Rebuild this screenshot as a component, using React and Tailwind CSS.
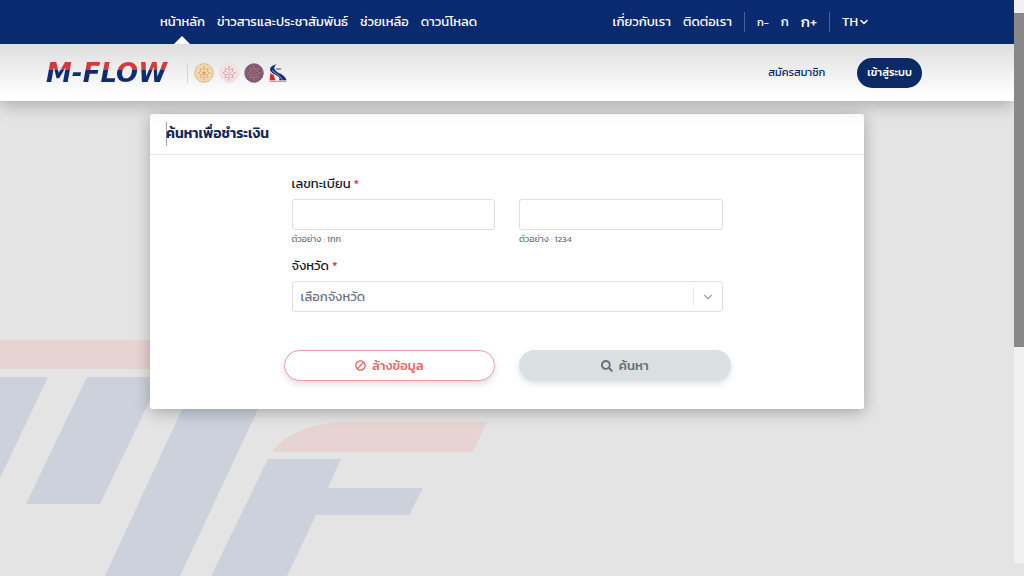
import React from "react";
import { FaBan, FaSearch } from "react-icons/fa";
import { FiChevronDown } from "react-icons/fi";

const NAV_LINKS = ["ข่าวสารและประชาสัมพันธ์", "ช่วยเหลือ", "ดาวน์โหลด"];

function Seal({ label, ring, fill, ink }) {
  return (
    <svg viewBox="0 0 40 40" className="size-5" role="img" aria-label={label}>
      <circle cx="20" cy="20" r="18.5" fill={fill} stroke={ring} strokeWidth="2" strokeDasharray="5 1" />
      <circle cx="20" cy="20" r="14.5" fill="none" stroke={ink} strokeWidth="1.5" strokeDasharray="2 2" />
      <path
        d="M20 7l3 6 5-2-1 6 5 3-5 3 1 6-5-1-3 5-3-5-5 1 1-6-5-3 5-3-1-6 5 2zM14 17l6 4 6-4M13 24l7-2 7 2M20 12v17"
        fill="none"
        stroke={ink}
        strokeWidth="1.6"
      />
      <circle cx="20" cy="20" r="3" fill={ring} />
    </svg>
  );
}

function HighwayMark() {
  return (
    <svg viewBox="0 0 54 54" className="size-[18px]" role="img" aria-label="กรมทางหลวง">
      <path d="M24 1C8 4 1 11 4 20c4 9 20 12 26 20 2 3 2 6 0 9h23c-4-12-13-18-25-23C16 20 10 9 24 1z" fill="#172f7c" />
      <path d="M9 19c8 9 25 14 31 29" fill="none" stroke="#fff" strokeWidth="1.5" />
      <path d="M4 28l10 5 5 16H2z" fill="#d8252f" />
      <path d="M21 15h15" stroke="#6b7280" strokeWidth="4" />
      <path d="M1 52h51" stroke="#c3495a" strokeWidth="2" />
    </svg>
  );
}

function Watermark() {
  return (
    <svg
      viewBox="0 0 512 256"
      className="pointer-events-none absolute left-0 top-80 h-64 w-[512px]"
      aria-hidden="true"
    >
      <g fill="#e7d3d2">
        <path d="M0 20H270L250 49H0z" />
        <path d="M272 132C287 112 315 102 350 102H487L473 132z" />
      </g>
      <g fill="#cdd1dc">
        <path d="M0 57H48L0 158z" />
        <path d="M87 57H161L100 184H26z" />
        <path d="M197 57H273L180 256H105z" />
        <path d="M268 139H341L328 168H423L409 195H316L287 256H211z" />
      </g>
    </svg>
  );
}

function Required() {
  return <span className="text-[#e02b3c]">*</span>;
}

function TopBar() {
  return (
    <div className="relative z-20 bg-[#0a2a70] pl-4 text-white">
      <div className="mx-auto flex h-11 max-w-[710px] items-center justify-between whitespace-nowrap text-[13px]">
        <nav className="flex h-full items-center gap-3">
          <a href="#home" className="relative flex h-full items-center">
            หน้าหลัก
            <span className="absolute bottom-0 left-1/2 size-0 -translate-x-1/2 border-x-8 border-b-8 border-x-transparent border-b-white" />
          </a>
          {NAV_LINKS.map((label) => (
            <a key={label} href="#section">
              {label}
            </a>
          ))}
        </nav>
        <div className="flex items-center gap-3">
          <a href="#about">เกี่ยวกับเรา</a>
          <a href="#contact">ติดต่อเรา</a>
          <div className="flex h-5 items-center gap-3 border-x border-[#4a6296] px-3">
            <button type="button" className="text-[11px]">ก-</button>
            <button type="button" className="text-[13px]">ก</button>
            <button type="button" className="text-[15px]">ก+</button>
          </div>
          <button type="button" className="flex items-center">
            TH
            <FiChevronDown className="size-3" strokeWidth={3} />
          </button>
        </div>
      </div>
    </div>
  );
}

function BrandBar() {
  return (
    <header className="relative z-10 flex h-[57px] items-center justify-between bg-linear-to-b from-[#dedede] to-white to-90% pl-[46px] pr-[92px] shadow-[0_4px_16px_rgba(0,0,0,0.25)]">
      <div className="flex items-center gap-[5px]">
        <a
          href="#home"
          className="w-[136px] bg-linear-to-b from-[#d33a3c] from-38% to-[#102c70] to-38% bg-clip-text font-['DejaVu_Sans'] text-[26px] leading-7 font-bold text-transparent italic"
        >
          M-FLOW
        </a>
        <span className="h-5 w-px bg-gray-300" />
        <div className="flex items-center gap-[5px] pl-px">
          <Seal label="ตราหน่วยงาน 1" ring="#dda95c" fill="#f3dfbd" ink="#d9a65d" />
          <Seal label="ตราหน่วยงาน 2" ring="#efd3d3" fill="#f8eeee" ink="#cf8f98" />
          <Seal label="ตราหน่วยงาน 3" ring="#80597b" fill="#7a5578" ink="#b58169" />
          <HighwayMark />
        </div>
      </div>
      <div className="flex items-center gap-8 whitespace-nowrap text-[11px] text-[#0a2a66]">
        <a href="#register">สมัครสมาชิก</a>
        <button type="button" className="h-[30px] rounded-full bg-[#0a2a66] px-2.5 font-medium text-white">
          เข้าสู่ระบบ
        </button>
      </div>
    </header>
  );
}

function PlateField({ id, label, hint }) {
  return (
    <div>
      <input
        id={id}
        type="text"
        aria-label={label}
        className="block h-[31px] w-full rounded-[3px] border border-[#dddee0] bg-white px-2 text-[13px]"
      />
      <p className="mt-[3px] text-[9px] leading-3 text-gray-500">{hint}</p>
    </div>
  );
}

function SearchCard() {
  return (
    <main className="relative mx-auto mt-[13px] max-w-[714px] rounded-xs bg-white pb-7 shadow-[0_3px_16px_rgba(0,0,0,0.28)]">
      <div className="flex h-[41px] items-center border-b border-gray-200 px-4">
        <span className="-mr-px h-6 w-px bg-gray-400" />
        <h1 className="text-sm font-semibold text-[#14275a]">ค้นหาเพื่อชำระเงิน</h1>
      </div>
      <form className="mx-auto max-w-[447px] pt-[19px]" onSubmit={(e) => e.preventDefault()}>
        <div className="px-2">
          <label htmlFor="plate-prefix" className="mb-[5px] block text-[13px] leading-5 text-gray-900">
            เลขทะเบียน <Required />
          </label>
          <div className="grid grid-cols-2 gap-6">
            <PlateField id="plate-prefix" label="เลขทะเบียน หมวด" hint="ตัวอย่าง : 1กก" />
            <PlateField id="plate-number" label="เลขทะเบียน หมายเลข" hint="ตัวอย่าง : 1234" />
          </div>
          <label htmlFor="province" className="mt-[11px] mb-[5px] block text-[13px] leading-5 text-gray-900">
            จังหวัด <Required />
          </label>
          <div className="relative">
            <select
              id="province"
              className="block h-[31px] w-full appearance-none rounded-[3px] border border-[#dddee0] bg-white pr-9 pl-2 text-[13px] text-gray-500"
            >
              <option>เลือกจังหวัด</option>
            </select>
            <span className="pointer-events-none absolute inset-y-1.5 right-0 flex w-[30px] items-center justify-center border-l border-gray-200 text-gray-400">
              <FiChevronDown className="size-3.5" />
            </span>
          </div>
        </div>
        <div className="mt-[38px] grid grid-cols-2 gap-6 text-[13px] font-medium">
          <button
            type="reset"
            className="flex h-[31px] items-center justify-center gap-1.5 rounded-full border border-[#eaa0a4] bg-white text-[#e8686c] shadow-[0_3px_6px_rgba(90,60,110,0.18)]"
          >
            <FaBan className="size-[11px] -scale-x-100" />
            ล้างข้อมูล
          </button>
          <button
            type="submit"
            className="flex h-[31px] items-center justify-center gap-1.5 rounded-full bg-[#dadfe2] text-[#6b6f74] shadow-[0_3px_6px_rgba(60,90,110,0.18)]"
          >
            <FaSearch className="size-3" />
            ค้นหา
          </button>
        </div>
      </form>
    </main>
  );
}

function ScrollTrack() {
  return (
    <div className="flex w-2.5 shrink-0 flex-col bg-[#f1f1f1]" aria-hidden="true">
      <div className="h-[13px]" />
      <div className="h-[334px] bg-[#888888]" />
      <div className="grow" />
      <div className="h-[13px] bg-[#e4e4e4]" />
    </div>
  );
}

export default function App() {
  return (
    <div className="flex min-h-screen bg-[#e4e4e4] font-['Kanit','Prompt','Noto_Sans_Thai','Noto_Sans',sans-serif]">
      <div className="relative min-w-0 grow overflow-hidden">
        <Watermark />
        <TopBar />
        <BrandBar />
        <SearchCard />
      </div>
      <ScrollTrack />
    </div>
  );
}
